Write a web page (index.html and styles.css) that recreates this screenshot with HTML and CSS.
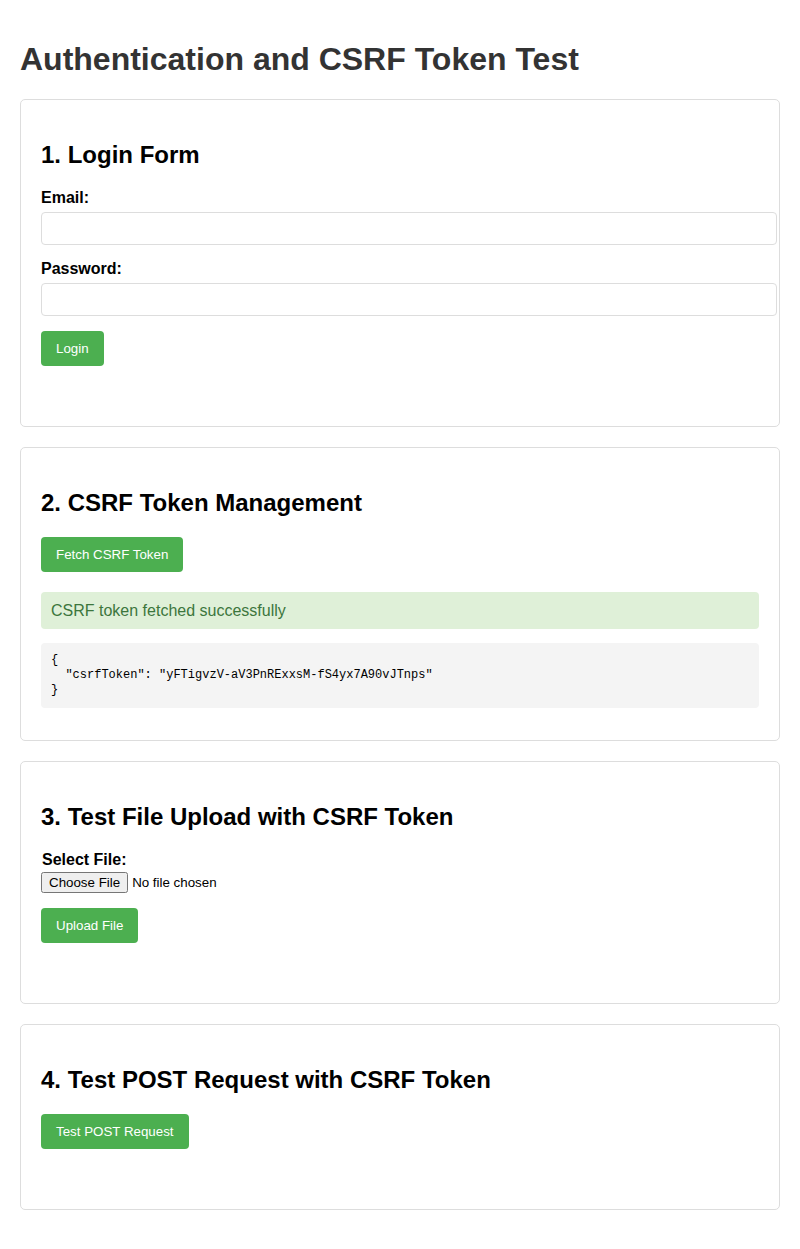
FILE: index.html
```html
<!DOCTYPE html>
<html lang="en">
<head>
<meta charset="utf-8">
<title>Authentication and CSRF Token Test</title>
<link rel="stylesheet" href="styles.css">
</head>
<body>
<h1 class="title">Authentication and CSRF Token Test</h1>

<section class="card">
  <h2 class="card-title">1. Login Form</h2>
  <form class="form">
    <label class="label" for="email">Email:</label>
    <input class="text-input" type="email" id="email">
    <label class="label" for="password">Password:</label>
    <input class="text-input" type="password" id="password">
    <button class="btn" type="button">Login</button>
  </form>
  <div class="result"></div>
</section>

<section class="card">
  <h2 class="card-title">2. CSRF Token Management</h2>
  <button class="btn" type="button">Fetch CSRF Token</button>
  <div class="result success">CSRF token fetched successfully</div>
  <pre class="code">{
  "csrfToken": "yFTigvzV-aV3PnRExxsM-fS4yx7A90vJTnps"
}</pre>
</section>

<section class="card">
  <h2 class="card-title">3. Test File Upload with CSRF Token</h2>
  <form class="form">
    <label class="label label-file" for="file">Select File:</label>
    <input class="file-input" type="file" id="file">
    <button class="btn" type="button">Upload File</button>
  </form>
  <div class="result"></div>
</section>

<section class="card">
  <h2 class="card-title">4. Test POST Request with CSRF Token</h2>
  <button class="btn" type="button">Test POST Request</button>
  <div class="result"></div>
</section>
</body>
</html>
```

FILE: styles.css
```css
html, body {
  margin: 0;
  background: #fff;
}

body {
  padding: 20px;
  font-family: "Liberation Sans", Arial, sans-serif;
  color: #000;
}

.title {
  font-size: 32px;
  font-weight: bold;
  color: #333;
  margin: 21px 0 21px;
  line-height: 37px;
}

.card {
  border: 1px solid #ddd;
  border-radius: 5px;
  padding: 20px;
  margin-bottom: 20px;
}

.card-title {
  font-size: 24px;
  font-weight: bold;
  margin: 21px 0 20px;
  line-height: 28px;
}

.form {
  margin: 0;
}

.label {
  display: block;
  font-size: 16px;
  font-weight: bold;
  line-height: 18px;
  margin-bottom: 5px;
}

.label-file {
  margin-left: 1px;
  margin-bottom: 3px;
}

.text-input {
  display: block;
  width: 100%;
  padding: 8px;
  border: 1px solid #ddd;
  border-radius: 4px;
  font-family: "Liberation Sans", Arial, sans-serif;
  font-size: 13.33px;
  line-height: 15px;
  margin: 0 0 15px;
}

.file-input {
  display: block;
  font-family: "Liberation Sans", Arial, sans-serif;
  font-size: 13.33px;
  margin: 0 0 15px;
}

.btn {
  display: inline-block;
  background: #4CAF50;
  color: #fff;
  border: none;
  border-radius: 4px;
  padding: 10px 15px;
  font-family: "Liberation Sans", Arial, sans-serif;
  font-size: 13.33px;
  line-height: 15px;
  cursor: pointer;
}

.result {
  margin-top: 20px;
  padding: 10px;
  border-radius: 4px;
}

.success {
  background: #dff0d8;
  color: #3c763d;
  font-size: 16px;
  line-height: 17px;
}

.code {
  background: #f4f4f4;
  border-radius: 4px;
  padding: 10px;
  margin: 14px 0 12px;
  font-family: "Liberation Mono", "DejaVu Sans Mono", monospace;
  font-size: 12px;
  line-height: 15px;
  color: #000;
  white-space: pre;
}
```
